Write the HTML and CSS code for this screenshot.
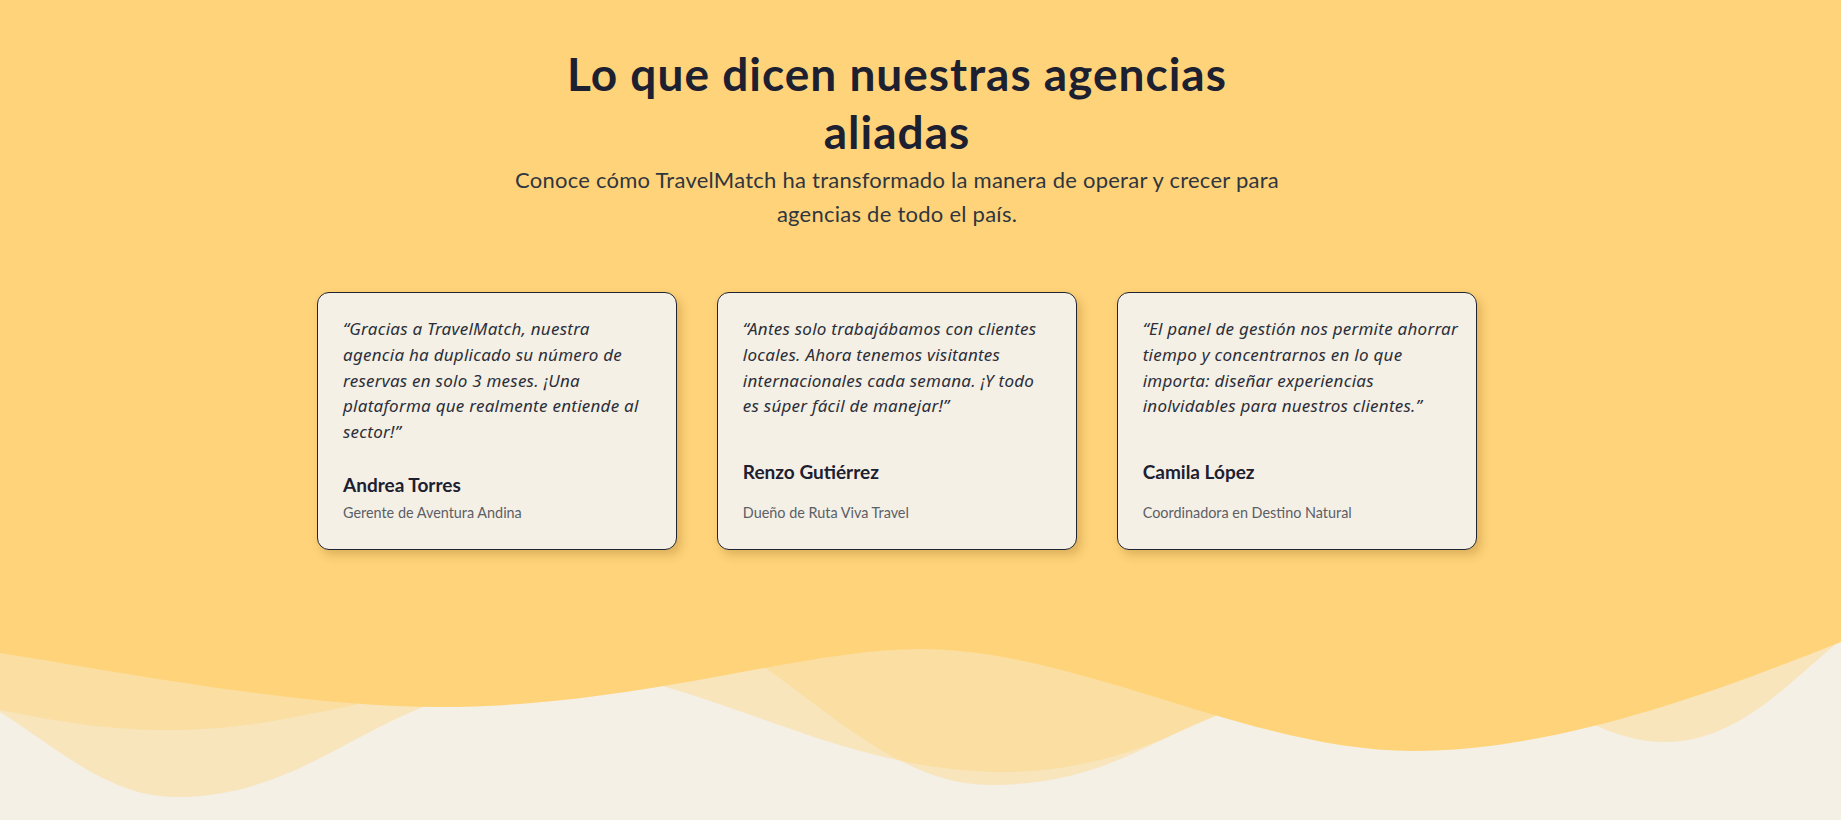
FILE: index.html
```html
<!DOCTYPE html>
<html lang="es">
<head>
<meta charset="utf-8">
<title>Testimonios</title>
<link rel="stylesheet" href="styles.css">
</head>
<body>
<section class="testimonials">
  <div class="inner">
    <header class="head">
      <h2 class="title">Lo que dicen nuestras agencias aliadas</h2>
      <p class="subtitle">Conoce cómo TravelMatch ha transformado la manera de operar y crecer para agencias de todo el país.</p>
    </header>
    <div class="cards">
      <article class="card">
        <p class="quote">“Gracias a TravelMatch, nuestra<br>agencia ha duplicado su número de<br>reservas en solo 3 meses. ¡Una<br>plataforma que realmente entiende al<br>sector!”</p>
        <h3 class="name">Andrea Torres</h3>
        <p class="role">Gerente de Aventura Andina</p>
      </article>
      <article class="card">
        <p class="quote">“Antes solo trabajábamos con clientes<br>locales. Ahora tenemos visitantes<br>internacionales cada semana. ¡Y todo<br>es súper fácil de manejar!”</p>
        <h3 class="name">Renzo Gutiérrez</h3>
        <p class="role">Dueño de Ruta Viva Travel</p>
      </article>
      <article class="card">
        <p class="quote">“El panel de gestión nos permite ahorrar<br>tiempo y concentrarnos en lo que<br>importa: diseñar experiencias<br>inolvidables para nuestros clientes.”</p>
        <h3 class="name">Camila López</h3>
        <p class="role">Coordinadora en Destino Natural</p>
      </article>
    </div>
  </div>
</section>
<svg class="waves" viewBox="0 0 1841 220" preserveAspectRatio="none" aria-hidden="true">
  <path class="wave-light" d="M0,112 C60,150 110,197 176,197 C280,197 340,140 423,107 C500,75 560,20 650,20 C760,20 860,185 990,185 C1100,185 1150,140 1213,117 C1300,85 1350,60 1420,60 C1520,60 1580,142 1665,142 C1740,142 1790,80 1841,40 L1841,0 L0,0 Z"/>
  <path class="wave-light" d="M0,110 C60,122 110,130 164,130 C250,130 300,115 346,107 C450,80 560,60 640,80 C760,110 860,170 1000,172 C1100,172 1160,140 1213,117 C1400,40 1600,20 1841,0 L0,0 Z"/>
  <path class="wave-main" d="M0,53 C120,72 300,107 440,107 C640,107 800,49 920,49 C1080,49 1250,151 1413,151 C1560,151 1720,90 1841,42 L1841,0 L0,0 Z"/>
</svg>
</body>
</html>
```

FILE: styles.css
```css
* {
  box-sizing: border-box;
}

html, body {
  margin: 0;
  padding: 0;
}

body {
  background: #f4f0e6;
  font-family: "Lato", "Noto Sans", sans-serif;
  color: #1c2030;
  height: 820px;
  overflow: hidden;
}

.testimonials {
  background: #ffd379;
  height: 600px;
  padding: 45px 47px 0 0;
}

.inner {
  max-width: 1160px;
  margin: 0 auto;
}

.head {
  display: flex;
  flex-direction: column;
  align-items: center;
  text-align: center;
}

.title {
  margin: 0;
  max-width: 700px;
  font-size: 46px;
  line-height: 58px;
  letter-spacing: 1px;
  font-weight: 700;
  color: #1c2030;
}

.subtitle {
  margin: 2px 0 0;
  max-width: 800px;
  font-size: 22px;
  line-height: 34px;
  letter-spacing: 0.25px;
  color: #30363f;
}

.cards {
  display: grid;
  grid-template-columns: repeat(3, 1fr);
  gap: 40px;
  margin-top: 61px;
}

.card {
  display: flex;
  flex-direction: column;
  justify-content: space-between;
  background: #f5f0e6;
  border: 1px solid #1f2430;
  border-radius: 12px;
  padding: 23px 18px 26px 25px;
  box-shadow: 4px 5px 10px rgba(120, 80, 0, 0.25);
}

.quote {
  margin: 0;
  font-family: "Noto Sans", sans-serif;
  font-style: italic;
  font-size: 17px;
  line-height: 25.8px;
  letter-spacing: 0.25px;
  white-space: nowrap;
  color: #2b2f3a;
}

.name {
  margin: 28px 0 0;
  font-size: 19px;
  line-height: 24px;
  font-weight: 700;
  color: #1c2030;
}

.role {
  margin: 6px 0 0;
  font-size: 14.4px;
  line-height: 20px;
  color: #5b5f66;
}

.waves {
  display: block;
  width: 100%;
  height: 220px;
}

.wave-light {
  fill: #ffd379;
  opacity: 0.38;
}

.wave-main {
  fill: #ffd379;
}
```
